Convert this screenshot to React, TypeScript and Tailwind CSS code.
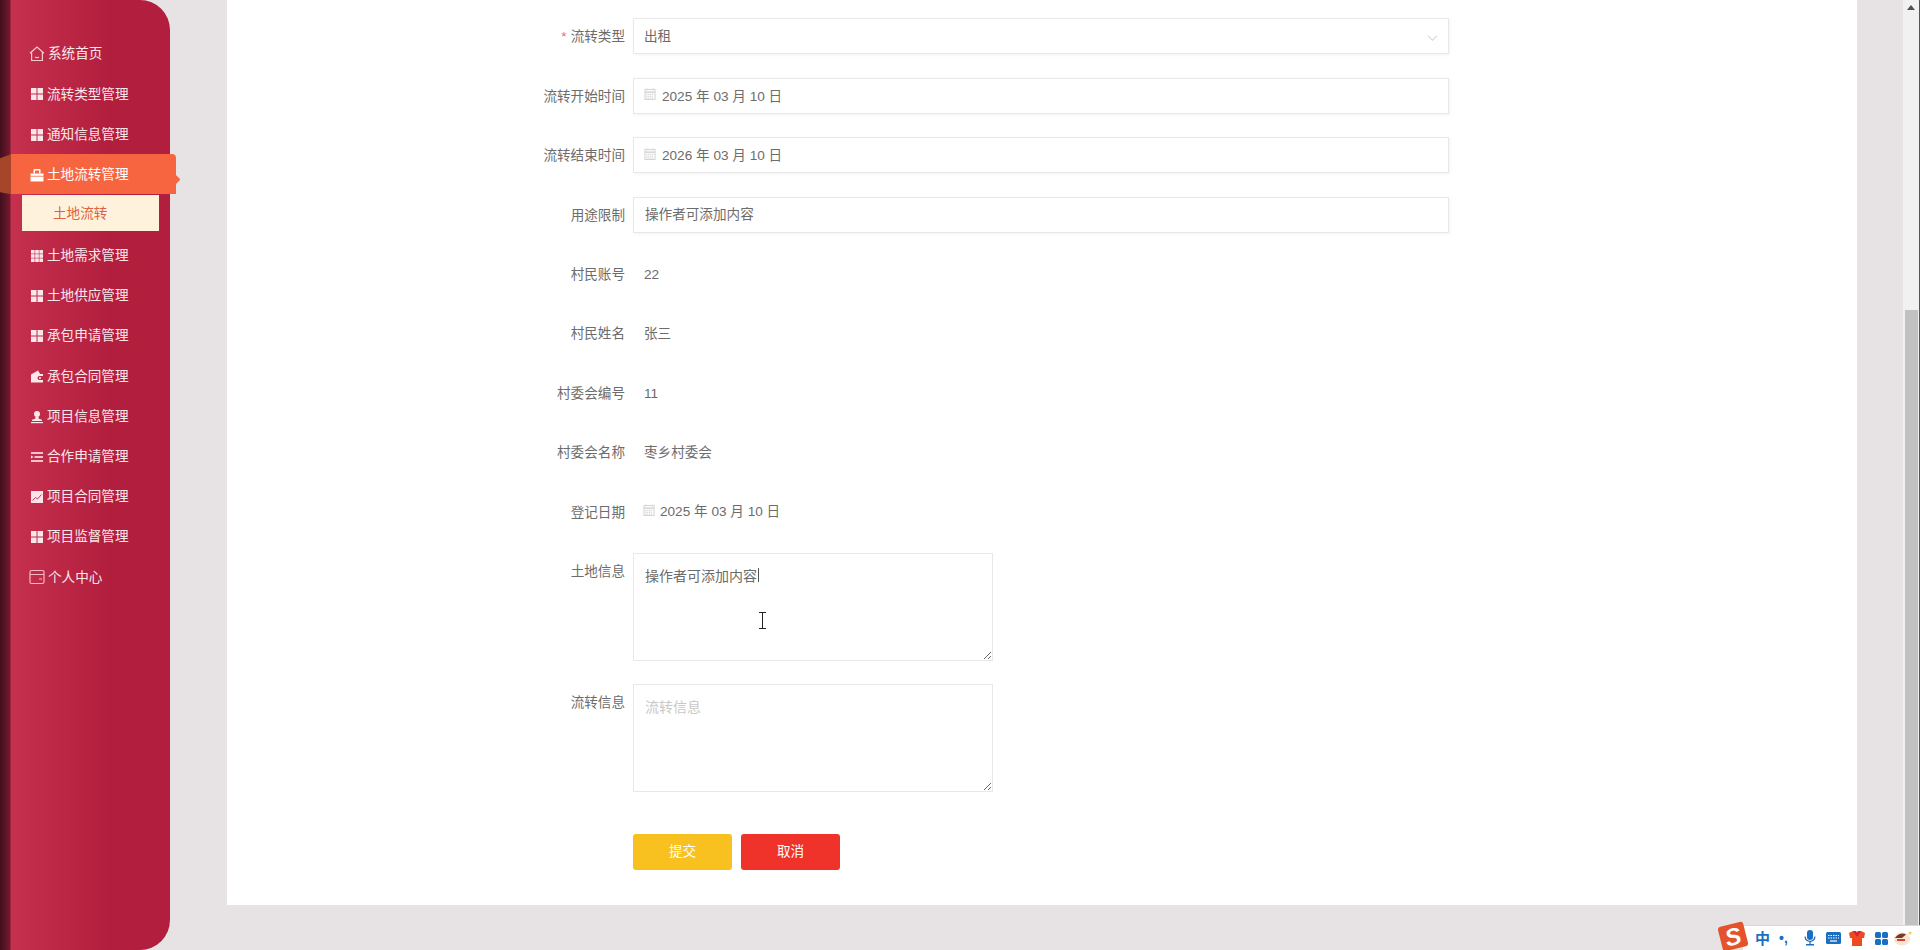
import { ReactNode } from "react"

const font = "[font-family:'Liberation_Sans','Noto_Sans_CJK_SC',sans-serif]"

function Svg({ children, cls = "fill-current" }: { children: ReactNode; cls?: string }) {
  return (
    <svg viewBox="0 0 14 14" className={"h-[14px] w-[14px] shrink-0 " + cls}>
      {children}
    </svg>
  )
}

const IconGrid = () => (
  <Svg>
    <rect x="1" y="1" width="5.5" height="5.5" />
    <rect x="7.5" y="1" width="5.5" height="5.5" />
    <rect x="1" y="7.5" width="5.5" height="5.5" />
    <rect x="7.5" y="7.5" width="5.5" height="5.5" />
  </Svg>
)

const IconGrid3 = () => (
  <Svg>
    {[1, 5.2, 9.4].map((y) =>
      [1, 5.2, 9.4].map((x) => <rect key={x + "-" + y} x={x} y={y} width="3.6" height="3.6" />)
    )}
  </Svg>
)

const IconHome = () => (
  <svg viewBox="0 0 16 16" fill="none" stroke="#f8cbd3" strokeWidth="1.2" className="ml-[-1px] h-[16px] w-[16px] shrink-0">
    <path d="M1 7.2 8 1l7 6.2M2.6 6v8.5h10.8V6" />
    <path d="M6 11c1.2.8 2.8.8 4 0" />
  </svg>
)

const IconCase = () => (
  <Svg>
    <path d="M3.500 5.500V2a1 1 0 0 1 1-1h5a1 1 0 0 1 1 1v3.500H9V2.500H5v3Z" />
    <path d="M.5 5.500h13V7.800H.5Z" />
    <path d="M.5 8.600h13V13.500H.5Z" />
  </Svg>
)

const IconWallet = () => (
  <Svg>
    <path d="M1 5.500 8 1.500l2.200 3.500H13v2H9.500a2 2 0 0 0 0 4H13v2.500H1Z" />
    <circle cx="10" cy="9" r="1" />
  </Svg>
)

const IconUser = () => (
  <Svg>
    <circle cx="7" cy="4" r="3" />
    <path d="M5.600 6.500h2.800l.4 2.200 3.200 1V11H2v-1.300l3.200-1Z" />
    <rect x="1" y="12" width="12" height="1.200" />
  </Svg>
)

const IconList = () => (
  <Svg>
    <rect x="1" y="2.200" width="12" height="1.600" />
    <rect x="4.500" y="6.200" width="8.500" height="1.600" />
    <path d="M1 5.600 3.600 7 1 8.400Z" />
    <rect x="1" y="10.200" width="12" height="1.600" />
  </Svg>
)

const IconChart = () => (
  <svg viewBox="0 0 14 14" className="h-[14px] w-[14px] shrink-0">
    <rect x="1" y="1" width="12" height="12" fill="#fbe3e8" />
    <path d="M2.500 10.500 5.500 7.500l2 1.500 4-4.500" fill="none" stroke="#c23a58" strokeWidth="1" />
  </svg>
)

const IconCard = () => (
  <svg viewBox="0 0 16 16" fill="none" stroke="#f8b6c4" strokeWidth="1.2" className="ml-[-1px] h-[16px] w-[16px] shrink-0">
    <rect x="1" y="1.500" width="14" height="13" rx="1.500" />
    <path d="M1 5.500h14M10 10h3" />
  </svg>
)

const IconCalendar = ({ cls = "" }: { cls?: string }) => (
  <svg viewBox="0 0 12 13" fill="none" className={"h-[12px] w-[12px] shrink-0 " + cls} stroke="#d2d2d2">
    <rect x="0.5" y="1.500" width="11" height="11" fill="#fafafa" />
    <path d="M0.5 4.500h11" strokeWidth="1.500" />
    <path d="M2.500 0.500v1.500M9.500 0.500v1.500" />
    <path d="M2 7h8M2 9h8M2 11h8" strokeDasharray="1.200 .8" />
  </svg>
)

const menu: { label: string; icon: ReactNode }[] = [
  { label: "系统首页", icon: <IconHome /> },
  { label: "流转类型管理", icon: <IconGrid /> },
  { label: "通知信息管理", icon: <IconGrid /> },
]

const menu2: { label: string; icon: ReactNode }[] = [
  { label: "土地需求管理", icon: <IconGrid3 /> },
  { label: "土地供应管理", icon: <IconGrid /> },
  { label: "承包申请管理", icon: <IconGrid /> },
  { label: "承包合同管理", icon: <IconWallet /> },
  { label: "项目信息管理", icon: <IconUser /> },
  { label: "合作申请管理", icon: <IconList /> },
  { label: "项目合同管理", icon: <IconChart /> },
  { label: "项目监督管理", icon: <IconGrid /> },
  { label: "个人中心", icon: <IconCard /> },
]

function MenuItem({ label, icon }: { label: string; icon: ReactNode }) {
  return (
    <li className="flex h-[40.2px] items-center gap-[3px] pl-[30px] pt-[1px] text-[13.6px] text-[#fbe6ea]">
      {icon}
      <span className="pt-[1px]">{label}</span>
    </li>
  )
}

function Sidebar() {
  return (
    <aside className="relative z-10 h-[950px] w-[170px] shrink-0 rounded-r-[30px] bg-[linear-gradient(90deg,#3f0f1c_0px,#72192f_10px,#c6304f_11px,#b21e3d_110px,#b21e3d_170px)] pt-[33.6px]">
      <ul>
        {menu.map((m) => (
          <MenuItem key={m.label} {...m} />
        ))}
        <li className="relative ml-[11px] flex h-[40px] w-[165px] items-center gap-[3px] rounded-tr-[4px] bg-[#f76540] pl-[19px] pt-[1px] text-[13.6px] text-white">
          <span className="absolute left-[-11px] top-0 h-[40px] w-[11px] bg-[#a5452a] [clip-path:polygon(0_4px,100%_0,100%_100%,0_38px)]" />
          <span className="absolute right-[-3px] top-[22px] h-[7px] w-[7px] rotate-45 rounded-[1px] bg-[#f76540]" />
          <IconCase />
          <span className="pt-[1px]">土地流转管理</span>
        </li>
        <li className="h-[41px] pl-[22px] pt-[1px]">
          <div className="flex h-[36px] w-[137px] items-center bg-[#fef2dc] pl-[31px] pt-[2px] text-[13.6px] text-[#e0613f]">土地流转</div>
        </li>
        {menu2.map((m) => (
          <MenuItem key={m.label} {...m} />
        ))}
      </ul>
    </aside>
  )
}

function Row({ label, required, children, top }: { label: string; required?: boolean; children: ReactNode; top?: boolean }) {
  return (
    <div className="flex gap-[8px]">
      <label className={"h-[36px] w-[398px] shrink-0 text-right text-[13.6px] text-[#6c6c6c] " + (top ? "pt-[7px] leading-[24px]" : "leading-[38px]")}>
        {required && <span className="mr-[4px] text-[#f0677c]">*</span>}
        {label}
      </label>
      <div className="flex-1">{children}</div>
    </div>
  )
}

const boxCls = "flex h-[36px] w-[816px] items-center border border-[#e8e8e8] bg-white pt-[2px] shadow-[1px_1px_3px_rgba(0,0,0,0.05)] text-[13.6px] text-[#6c6c6c]"

function DateBox({ value }: { value: string }) {
  return (
    <div className={boxCls + " gap-[6px] pl-[10px]"}>
      <IconCalendar cls="mt-[-5px]" />
      <span>{value}</span>
    </div>
  )
}

function Plain({ value }: { value: string }) {
  return <div className="h-[36px] pl-[11px] text-[13.6px] leading-[38px] text-[#6c6c6c]">{value}</div>
}

const areaCls = "block h-[108px] w-[360px] border border-[#e8e8e8] bg-white pb-[11px] pt-[12px] pl-[11px] pr-[10px] text-[14px] leading-[20px] text-[#6c6c6c] outline-none placeholder:text-[#c8c8c8] " + font

function Form() {
  return (
    <form className="flex flex-col gap-[23.4px] pt-[18.4px]">
      <Row label="流转类型" required>
        <div className={boxCls + " justify-between pl-[10px] pr-[10px]"}>
          <span>出租</span>
          <svg viewBox="0 0 12 8" fill="none" stroke="#d4d4d4" strokeWidth="1.200" className="mt-[2px] h-[7px] w-[11px]">
            <path d="M1 1l5 5 5-5" />
          </svg>
        </div>
      </Row>
      <Row label="流转开始时间">
        <DateBox value="2025 年 03 月 10 日" />
      </Row>
      <Row label="流转结束时间">
        <DateBox value="2026 年 03 月 10 日" />
      </Row>
      <Row label="用途限制">
        <div className={boxCls + " pl-[11px]"}>操作者可添加内容</div>
      </Row>
      <Row label="村民账号">
        <Plain value="22" />
      </Row>
      <Row label="村民姓名">
        <Plain value="张三" />
      </Row>
      <Row label="村委会编号">
        <Plain value="11" />
      </Row>
      <Row label="村委会名称">
        <Plain value="枣乡村委会" />
      </Row>
      <Row label="登记日期">
        <div className="flex h-[36px] items-center gap-[5px] pl-[10px] pt-[2px] text-[13.6px] text-[#6c6c6c]">
          <IconCalendar cls="mt-[-5px]" />
          <span>2025 年 03 月 10 日</span>
        </div>
      </Row>
      <Row label="土地信息" top>
        <div className="relative w-[360px]">
          <textarea readOnly defaultValue="操作者可添加内容" className={areaCls} />
          <span className="absolute left-[125px] top-[15px] h-[14px] w-px bg-[#555]" />
          {/* text cursor */}
          <svg viewBox="0 0 9 17" fill="none" stroke="#222" className="absolute left-[125px] top-[59px] h-[17px] w-[9px]">
            <path d="M1 .5h7M4.500.5v16M1 16.500h7" />
          </svg>
        </div>
      </Row>
      <Row label="流转信息" top>
        <textarea readOnly placeholder="流转信息" className={areaCls} />
      </Row>
      <div className="mt-[18px] flex gap-[9px] pl-[406px]">
        <button type="button" className="h-[36px] w-[99px] rounded-[3px] bg-[#f9c11f] pt-[2px] text-[13.6px] text-white">提交</button>
        <button type="button" className="h-[36px] w-[99px] rounded-[3px] bg-[#ef322a] pt-[2px] text-[13.6px] text-white">取消</button>
      </div>
    </form>
  )
}

function Scrollbar() {
  return (
    <div className="relative flex h-[950px] w-[17px] shrink-0 flex-col items-center border-r border-[#555] bg-[#f1f1f1]">
      <svg viewBox="0 0 8 5" className="mt-[5px] h-[5px] w-[8px] fill-[#505050]">
        <path d="M4 0l4 5H0z" />
      </svg>
      <div className="mt-[300px] h-[624px] w-[13px] bg-[#c1c1c1]" />
    </div>
  )
}

function ImeBar() {
  return (
    <div className="absolute bottom-0 right-0 z-20 flex h-[25px] w-[177px] items-center border-t border-[#cfdce8] bg-white pl-[12px]">
      <div className="absolute left-[-23px] top-[-2px] flex h-[25px] w-[26px] rotate-[-14deg] items-center justify-center rounded-[3px] bg-[#e4532a] text-[24px] font-bold italic leading-none text-white">S</div>
      <span className="text-[15px] font-bold leading-none text-[#1a6fc0]">中</span>
      <span className="ml-[9px] text-[14px] font-bold leading-none text-[#1a6fc0]">•,</span>
      <svg viewBox="0 0 14 16" className="ml-[15px] h-[16px] w-[14px]" fill="#1a6fc0">
        <rect x="4" y="0" width="6" height="10" rx="3" />
        <path d="M1.500 6.500h1.200a4.300 4.300 0 0 0 8.600 0h1.200a5.500 5.500 0 0 1-4.900 5.400V14H11v1.500H3V14h3.400v-2.100a5.500 5.500 0 0 1-4.900-5.400Z" />
      </svg>
      <svg viewBox="0 0 15 12" className="ml-[9px] h-[12px] w-[15px]">
        <rect x="0" y="0" width="15" height="12" rx="1.500" fill="#1a6fc0" />
        <path d="M2 3.500h11M2 6h11" stroke="#fff" strokeDasharray="1.500 1" />
        <path d="M4 9h7" stroke="#fff" strokeWidth="1.200" />
      </svg>
      <svg viewBox="0 0 16 15" className="ml-[8px] h-[15px] w-[16px]">
        <path d="M0 2 4 0h3l1 2 1-2h3l4 2-1 5h-2v8H3V7H1Z" fill="#ee4a1f" />
        <path d="M4 0h3l1 2 1-2h3L8 6Z" fill="#d8203a" />
      </svg>
      <svg viewBox="0 0 13 13" className="ml-[10px] h-[13px] w-[13px]" fill="#1a6fc0">
        <rect x="0" y="0" width="6" height="6" rx="1.500" />
        <rect x="7" y="0" width="6" height="6" rx="1.500" />
        <rect x="0" y="7" width="6" height="6" rx="1.500" />
        <rect x="7" y="7" width="6" height="6" rx="1.500" />
      </svg>
      <svg viewBox="0 0 18 16" className="ml-[6px] h-[16px] w-[18px]">
        <ellipse cx="8" cy="9" rx="8" ry="6.500" fill="#f6e3d3" />
        <path d="M1 8c2-4 8-6 11-3.500l-4 3.500Z" fill="#7a3a22" />
        <rect x="3" y="9" width="8" height="2" fill="#d9402a" />
        <circle cx="16" cy="3" r="1.600" fill="#f5d04a" />
      </svg>
    </div>
  )
}

export default function App() {
  return (
    <div className={"relative flex h-[950px] w-[1920px] overflow-hidden bg-[#e7e3e4] " + font}>
      <Sidebar />
      <main className="flex-1 pl-[57px] pr-[46px]">
        <div className="h-[905px] bg-white">
          <Form />
        </div>
      </main>
      <Scrollbar />
      <ImeBar />
    </div>
  )
}
